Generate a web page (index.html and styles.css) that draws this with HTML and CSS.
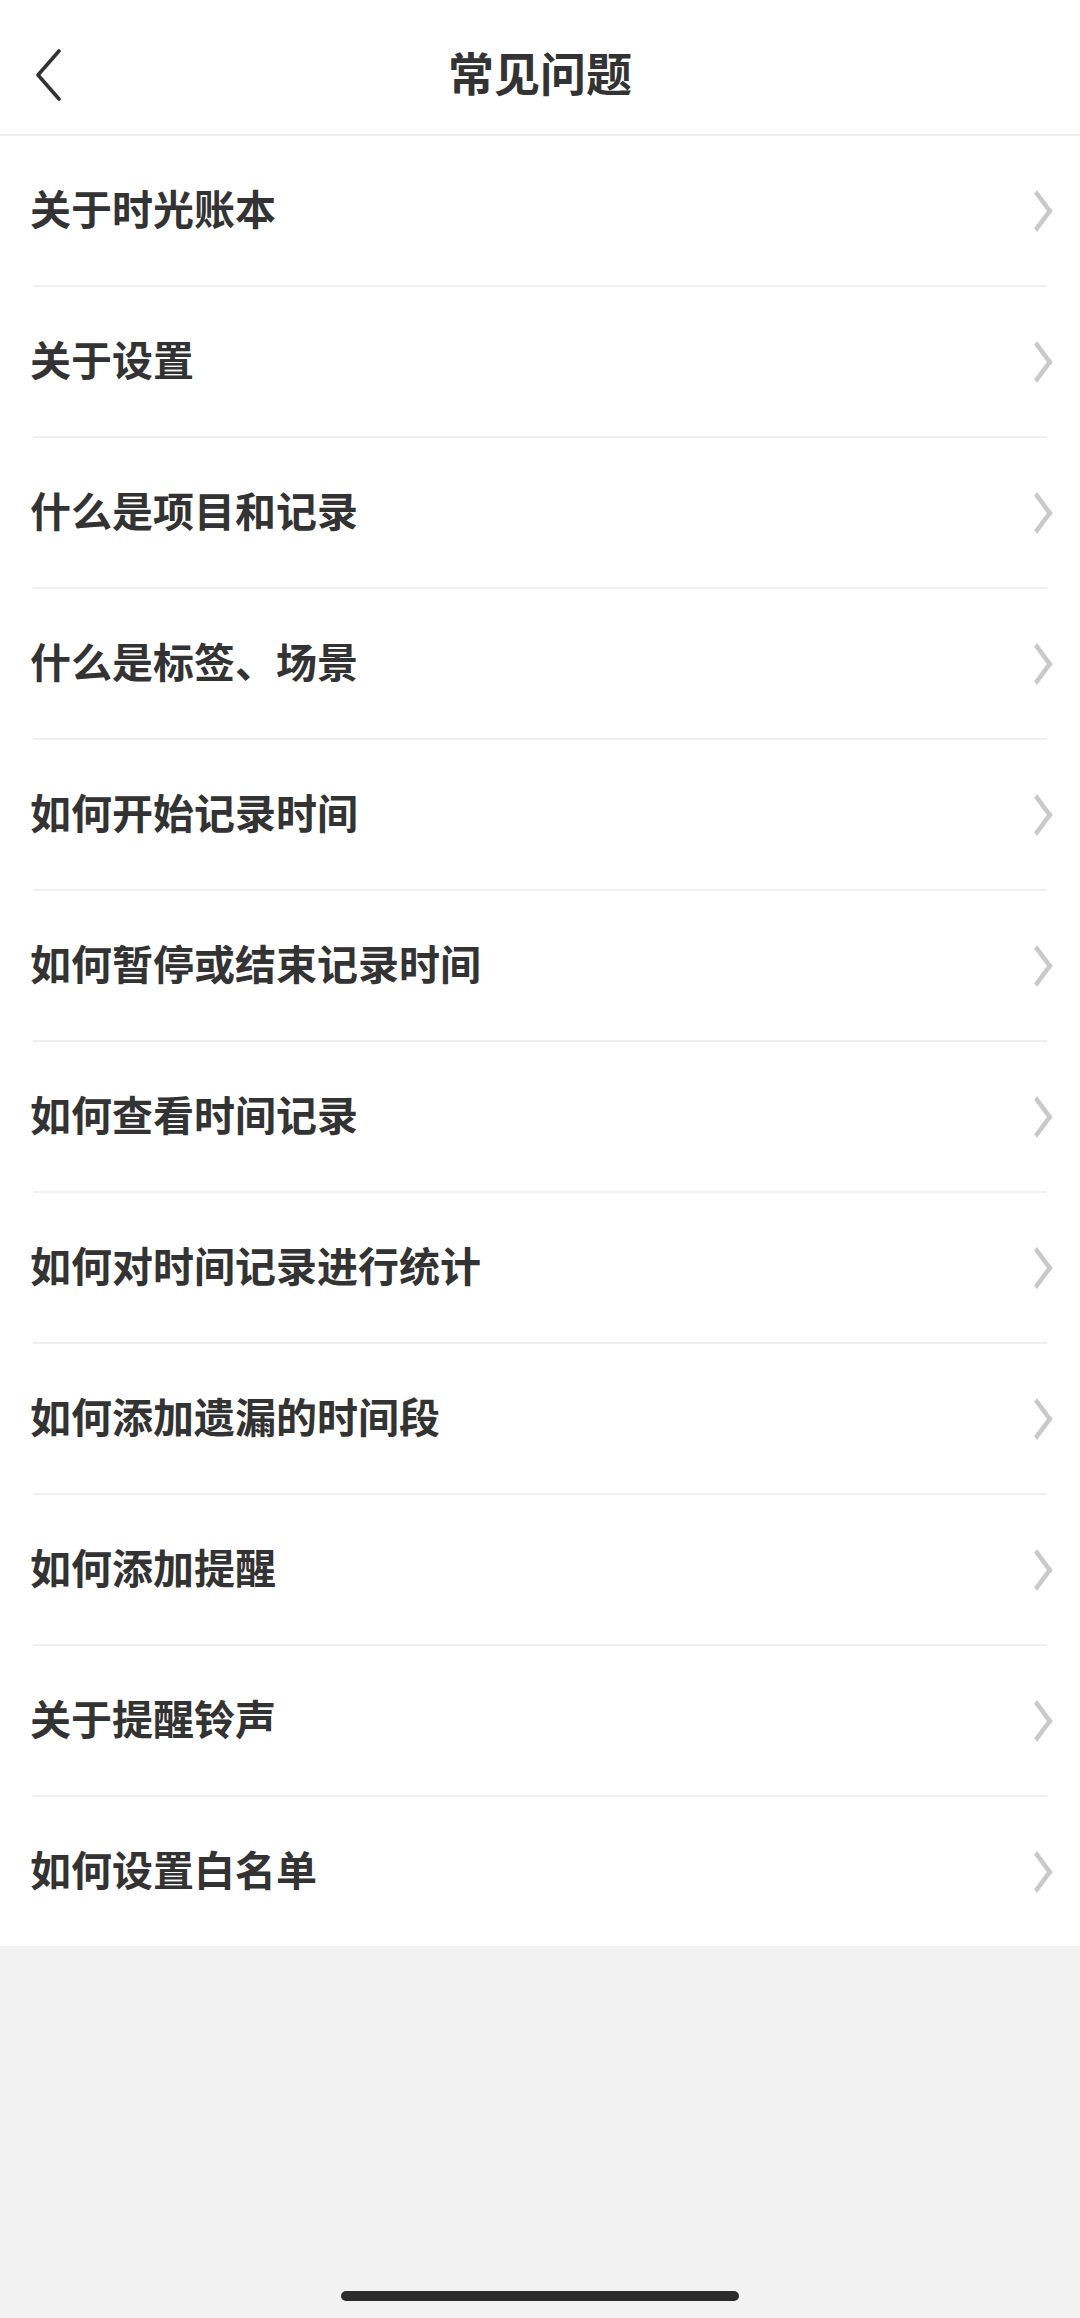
FILE: index.html
```html
<!DOCTYPE html>
<html lang="zh-CN">
<head>
    <meta charset="UTF-8">
    <meta name="viewport" content="width=device-width, initial-scale=1.0">
    <title>常见问题</title>
    <link rel="stylesheet" href="styles.css">
</head>
<body>

<div class="screen">
    <header class="nav-bar">
        <button class="back-button" aria-label="返回">
            <svg width="30" height="52" viewBox="0 0 30 52">
                <path d="M26 2 L5 26 L26 50" fill="none" stroke="#333333" stroke-width="3.6" stroke-linecap="round" stroke-linejoin="round"/>
            </svg>
        </button>
        <h1>常见问题</h1>
    </header>

    <ul class="faq-list">
        <li class="faq-item"><span>关于时光账本</span><i class="arrow"></i></li>
        <li class="faq-item"><span>关于设置</span><i class="arrow"></i></li>
        <li class="faq-item"><span>什么是项目和记录</span><i class="arrow"></i></li>
        <li class="faq-item"><span>什么是标签、场景</span><i class="arrow"></i></li>
        <li class="faq-item"><span>如何开始记录时间</span><i class="arrow"></i></li>
        <li class="faq-item"><span>如何暂停或结束记录时间</span><i class="arrow"></i></li>
        <li class="faq-item"><span>如何查看时间记录</span><i class="arrow"></i></li>
        <li class="faq-item"><span>如何对时间记录进行统计</span><i class="arrow"></i></li>
        <li class="faq-item"><span>如何添加遗漏的时间段</span><i class="arrow"></i></li>
        <li class="faq-item"><span>如何添加提醒</span><i class="arrow"></i></li>
        <li class="faq-item"><span>关于提醒铃声</span><i class="arrow"></i></li>
        <li class="faq-item"><span>如何设置白名单</span><i class="arrow"></i></li>
    </ul>

    <div class="filler">
        <div class="home-indicator"></div>
    </div>
</div>

</body>
</html>
```

FILE: styles.css
```css
* {
    box-sizing: border-box;
}

body {
    margin: 0;
    padding: 0;
    background-color: #f2f2f2;
    color: #333333;
    font-family: "Noto Sans CJK SC", "Noto Sans", sans-serif;
}

.screen {
    width: 1080px;
    min-height: 2318px;
    display: flex;
    flex-direction: column;
}

.nav-bar {
    height: 136px;
    background-color: #ffffff;
    border-bottom: 2px solid #efefef;
    display: flex;
    align-items: center;
    justify-content: center;
    position: relative;
}

.nav-bar h1 {
    margin: 8px 0 0;
    font-size: 46px;
    font-weight: bold;
    color: #333333;
}

.back-button {
    position: absolute;
    left: 33px;
    top: 49px;
    padding: 0;
    border: none;
    background: none;
    display: flex;
}

.faq-list {
    list-style: none;
    margin: 0;
    padding: 0;
    background-color: #ffffff;
}

.faq-item {
    height: 151px;
    margin: 0 33px;
    border-bottom: 2px solid #f0f0f0;
    display: flex;
    align-items: center;
    justify-content: space-between;
}

.faq-item:last-child {
    height: 149px;
    border-bottom: none;
}

.faq-item span {
    margin: 0 0 8px -3px;
    font-size: 41px;
    font-weight: bold;
    color: #333333;
}

.arrow {
    width: 22px;
    height: 22px;
    margin-right: -1px;
    border-top: 4px solid #c9c9c9;
    border-right: 4px solid #c9c9c9;
    transform: scaleY(1.35) rotate(45deg);
}

.filler {
    flex: 1;
    display: flex;
    align-items: flex-end;
    justify-content: center;
    padding-bottom: 17px;
}

.home-indicator {
    width: 398px;
    height: 10px;
    border-radius: 5px;
    background-color: #2b2b2b;
}
```
